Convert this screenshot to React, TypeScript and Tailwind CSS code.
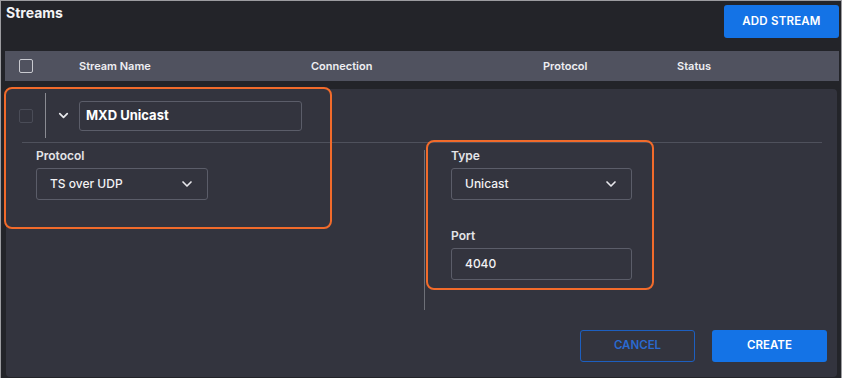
import { ChevronDown } from 'lucide-react';

function Field({ label, value, select, width }: { label: string; value: string; select?: boolean; width: string }) {
  return (
    <div className="flex flex-col">
      <span className="text-[12px] font-semibold text-[#e4e4e8] leading-[14px]">{label}</span>
      <div
        className={`${width} mt-[5px] h-[32px] flex items-center justify-between pl-[13px] pr-[12px] border border-[#5b5d69] rounded-[3px] text-[12px] font-medium text-[#f2f2f4]`}
      >
        <span>{value}</span>
        {select && <ChevronDown size={16} strokeWidth={2.5} className="text-[#e8e8ec]" />}
      </div>
    </div>
  );
}

export default function App() {
  return (
    <div
      className="relative w-[842px] h-[378px] overflow-hidden bg-[#232429] border-t border-l border-r border-[#9c9ca0] flex flex-col"
      style={{ fontFamily: 'Inter, "Noto Sans", sans-serif' }}
    >
      {/* title bar */}
      <div className="flex items-start justify-between pl-[5px] pr-[2px] pt-[4px]">
        <h1 className="text-[14px] font-bold text-[#f4f4f6] leading-[15px]">Streams</h1>
        <button className="w-[115px] h-[33px] rounded-[3px] bg-[#1473e6] text-[11.5px] font-semibold text-white tracking-[0.2px]">
          ADD STREAM
        </button>
      </div>

      {/* table header */}
      <div className="ml-[4px] mr-[2px] mt-[13px] h-[30px] bg-[#50525f] flex items-center text-[11px] font-semibold text-[#eeeef2]">
        <div className="ml-[14px] w-[14px] h-[14px] border-[1.5px] border-[#c9cad0] rounded-[2px]" />
        <span className="ml-[46px] w-[232px]">Stream Name</span>
        <span className="w-[232px]">Connection</span>
        <span className="w-[134px]">Protocol</span>
        <span>Status</span>
      </div>

      {/* editing panel */}
      <div className="ml-[5px] mr-[4px] mt-[8px] flex-1 mb-[1px] bg-[#33343e] rounded-[4px] flex flex-col">
        <div className="flex items-center h-[53px]">
          <div className="ml-[13px] w-[14px] h-[14px] border border-[#4a4c57] rounded-[2px]" />
          <div className="ml-[12px] w-px h-[45px] bg-[#8a8b92]" />
          <ChevronDown size={15} strokeWidth={2.8} className="ml-[10px] text-[#e8e8ec]" />
          <div className="ml-[8px] w-[223px] h-[30px] border border-[#5b5d69] rounded-[3px] flex items-center pl-[6px] text-[13px] font-bold text-white">
            MXD Unicast
          </div>
        </div>
        <div className="ml-[16px] mr-[15px] h-px bg-[#4f515c]" />

        <div className="flex">
          <div className="ml-[30px] mt-[6px] w-[388px]">
            <Field label="Protocol" value="TS over UDP" select width="w-[172px]" />
          </div>
          <div className="mt-[7px] w-px h-[160px] bg-[#6e7078]" />
          <div className="ml-[26px] mt-[6px] flex flex-col gap-[29px]">
            <Field label="Type" value="Unicast" select width="w-[181px]" />
            <Field label="Port" value="4040" width="w-[181px]" />
          </div>
        </div>

        <div className="mt-auto mb-[15px] mr-[10px] flex justify-end gap-[17px]">
          <button className="w-[115px] h-[32px] rounded-[3px] border border-[#1d5fc0] text-[11.5px] font-semibold text-[#2a6ad0]">
            CANCEL
          </button>
          <button className="w-[115px] h-[32px] rounded-[3px] bg-[#1473e6] text-[11.5px] font-semibold text-white">
            CREATE
          </button>
        </div>
      </div>

      {/* callout highlights */}
      <div className="absolute left-[3px] top-[86px] w-[328px] h-[142px] border-2 border-[#f26b2b] rounded-[8px] pointer-events-none" />
      <div className="absolute left-[425px] top-[139px] w-[228px] h-[150px] border-2 border-[#f26b2b] rounded-[8px] pointer-events-none" />
    </div>
  );
}
